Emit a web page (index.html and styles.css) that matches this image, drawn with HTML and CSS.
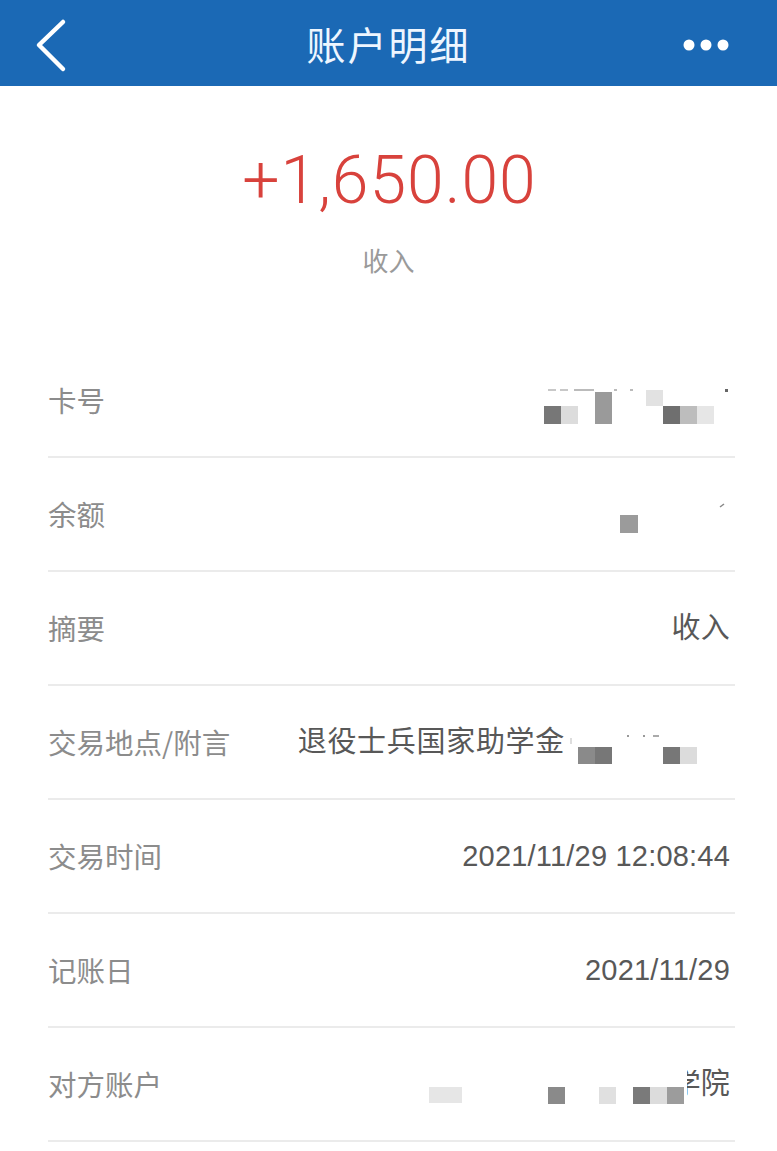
FILE: index.html
```html
<!DOCTYPE html>
<html lang="zh-CN">
<head>
<meta charset="utf-8">
<title>账户明细</title>
<link rel="stylesheet" href="styles.css">
</head>
<body>
<header class="topbar">
  <svg class="back" width="40" height="60" viewBox="0 0 40 60"><polyline points="33,9 9,32 33,56" fill="none" stroke="#fff" stroke-width="4.5" stroke-linecap="round" stroke-linejoin="round"/></svg>
  <h1 class="title">账户明细</h1>
  <svg class="more" width="56" height="20" viewBox="0 0 56 20"><circle cx="10" cy="12" r="5.5" fill="#fff"/><circle cx="27" cy="12" r="5.5" fill="#fff"/><circle cx="44" cy="12" r="5.5" fill="#fff"/></svg>
</header>

<section class="summary">
  <div class="amount">+1,650.00</div>
  <div class="kind">收入</div>
</section>

<ul class="details">
  <li class="row">
    <span class="label">卡号</span>
    <span class="value">
      <svg class="mask" width="186" height="60" viewBox="0 0 186 60">
        <rect x="4" y="19" width="8" height="2" fill="#c8c8c8"/>
        <rect x="16" y="19" width="8" height="2" fill="#c8c8c8"/>
        <rect x="30" y="19" width="20" height="2" fill="#bbb"/>
        <rect x="70" y="19" width="3" height="2" fill="#bbb"/>
        <rect x="86" y="19" width="3" height="2" fill="#bbb"/>
        <rect x="0" y="36" width="17" height="18" fill="#777"/>
        <rect x="17" y="36" width="17" height="18" fill="#dcdcdc"/>
        <rect x="51" y="22" width="17" height="32" fill="#9a9a9a"/>
        <rect x="102" y="20" width="17" height="16" fill="#e2e2e2"/>
        <rect x="119" y="36" width="17" height="18" fill="#6f6f6f"/>
        <rect x="136" y="36" width="17" height="18" fill="#bdbdbd"/>
        <rect x="153" y="36" width="17" height="18" fill="#e6e6e6"/>
        <rect x="181" y="19" width="3" height="3" fill="#666"/>
      </svg>
    </span>
  </li>
  <li class="row">
    <span class="label">余额</span>
    <span class="value">
      <svg class="mask" width="130" height="60" viewBox="0 0 130 60">
        <rect x="20" y="31" width="18" height="18" fill="#9b9b9b"/>
        <line x1="120" y1="23" x2="124" y2="20" stroke="#888" stroke-width="1.5"/>
      </svg>
    </span>
  </li>
  <li class="row">
    <span class="label">摘要</span>
    <span class="value">收入</span>
  </li>
  <li class="row">
    <span class="label">交易地点/附言</span>
    <span class="value"><span class="cjk">退役士兵国家助学金</span><svg class="mask" width="165" height="60" viewBox="0 0 165 60">
        <rect x="5" y="26" width="2" height="6" fill="#ddd"/>
        <rect x="13" y="35" width="17" height="17" fill="#8a8a8a"/>
        <rect x="30" y="35" width="17" height="17" fill="#777"/>
        <rect x="62" y="23" width="2" height="2" fill="#999"/>
        <rect x="78" y="23" width="2" height="2" fill="#999"/>
        <rect x="88" y="23" width="6" height="2" fill="#aaa"/>
        <rect x="98" y="35" width="17" height="17" fill="#777"/>
        <rect x="115" y="35" width="17" height="17" fill="#dcdcdc"/>
      </svg></span>
  </li>
  <li class="row">
    <span class="label">交易时间</span>
    <span class="value">2021/11/29 12:08:44</span>
  </li>
  <li class="row">
    <span class="label">记账日</span>
    <span class="value">2021/11/29</span>
  </li>
  <li class="row">
    <span class="label">对方账户</span>
    <span class="value"><svg class="mask" width="263" height="60" viewBox="0 0 263 60">
        <rect x="5" y="33" width="33" height="16" fill="#e6e6e6"/>
        <rect x="124" y="33" width="17" height="17" fill="#8a8a8a"/>
        <rect x="175" y="33" width="17" height="17" fill="#e0e0e0"/>
        <rect x="209" y="33" width="17" height="17" fill="#7a7a7a"/>
        <rect x="226" y="33" width="17" height="17" fill="#dcdcdc"/>
        <rect x="243" y="33" width="17" height="17" fill="#9c9c9c"/>
      </svg><span class="cut"><span class="cut-inner">学</span></span>院</span>
  </li>
</ul>
</body>
</html>
```

FILE: styles.css
```css
* { box-sizing: border-box; }

html, body {
  margin: 0;
  padding: 0;
  background: #fff;
}

body {
  width: 777px;
  font-family: "Liberation Sans", "Noto Sans CJK SC", sans-serif;
}

.topbar {
  height: 86px;
  background: #1b69b5;
  display: grid;
  grid-template-columns: 1fr auto 1fr;
  align-items: center;
  padding: 0 30px;
}

.back {
  display: block;
  justify-self: start;
}

.title {
  margin: 0;
  font-family: "Noto Sans CJK SC", sans-serif;
  font-weight: 400;
  font-size: 39px;
  line-height: 1;
  color: #eef6ff;
  letter-spacing: 2px;
}

.more {
  display: block;
  justify-self: end;
  margin-right: 12px;
}

.summary {
  display: flex;
  flex-direction: column;
  align-items: center;
  padding: 62px 0 71px;
}

.amount {
  font-family: "Roboto", "Liberation Sans", sans-serif;
  font-weight: 300;
  font-size: 66px;
  line-height: 66px;
  letter-spacing: 1px;
  color: #d8423c;
  padding-left: 2px;
}

.kind {
  margin-top: 33px;
  font-family: "Noto Sans CJK SC", sans-serif;
  font-size: 26px;
  line-height: 26px;
  color: #9a9a9a;
}

.details {
  list-style: none;
  margin: 0 42px 0 48px;
  padding: 0;
}

.row {
  height: 114px;
  display: flex;
  align-items: center;
  justify-content: space-between;
  border-bottom: 2px solid #ebebeb;
  padding-right: 5px;
}

.label {
  font-family: "Noto Sans CJK SC", sans-serif;
  font-size: 28.5px;
  color: #8c8c8c;
  line-height: 1;
}

.value {
  display: flex;
  align-items: center;
  font-family: "Liberation Sans", "Noto Sans CJK SC", sans-serif;
  font-size: 29px;
  line-height: 1;
  letter-spacing: 0.2px;
  color: #585858;
}

.cjk {
  letter-spacing: 0.7px;
}

.mask {
  display: block;
  flex: none;
}

.cut {
  display: inline-block;
  width: 14px;
  overflow: hidden;
  white-space: nowrap;
}

.cut-inner {
  display: inline-block;
  margin-left: -15px;
}
```
